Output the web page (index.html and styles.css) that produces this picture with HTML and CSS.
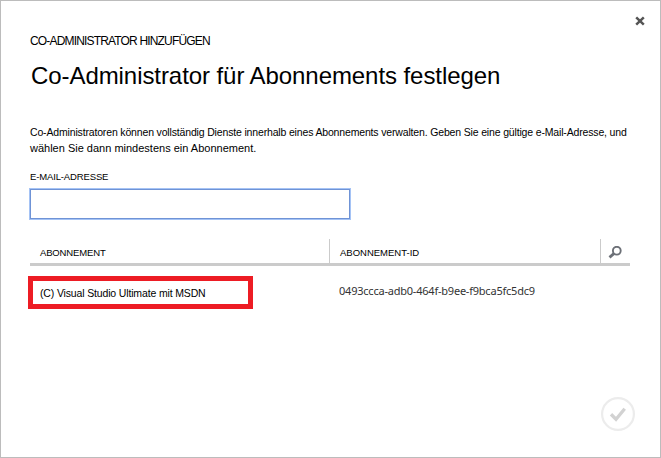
FILE: index.html
```html
<!DOCTYPE html>
<html lang="de">
<head>
<meta charset="utf-8">
<title>Co-Administrator hinzufügen</title>
<link rel="stylesheet" href="styles.css">
</head>
<body>
<main class="dialog">
  <button class="close" aria-label="Schließen"><svg width="10" height="10" viewBox="0 0 10 10"><path d="M1.2 1.4 8.8 8.6M8.8 1.4 1.2 8.6" stroke="#555" stroke-width="2.5"/></svg></button>
  <div class="eyebrow"><span>CO-ADMINISTRATOR HINZUFÜGEN</span></div>
  <h1 class="title"><span>Co-Administrator für Abonnements festlegen</span></h1>
  <p class="intro"><span class="line-one">Co-Administratoren können vollständig Dienste innerhalb eines Abonnements verwalten. Geben Sie eine gültige e-Mail-Adresse, und</span><br><span class="line-two">wählen Sie dann mindestens ein Abonnement.</span></p>
  <label class="label" for="email"><span>E-MAIL-ADRESSE</span></label>
  <input class="email" id="email" type="text">
  <div class="head">
    <div class="cell name"><span>ABONNEMENT</span></div>
    <div class="cell id"><span>ABONNEMENT-ID</span></div>
    <div class="cell search"><svg width="14" height="14" viewBox="0 0 14 14"><circle cx="8.8" cy="4.7" r="3.9" fill="none" stroke="#6c7077" stroke-width="1.9"/><path d="M6.1 7.4 1.5 11.4" stroke="#6c7077" stroke-width="2.8"/></svg></div>
  </div>
  <div class="row">
    <div class="selected"><span>(C) Visual Studio Ultimate mit MSDN</span></div>
    <div class="guid"><span>0493ccca-adb0-464f-b9ee-f9bca5fc5dc9</span></div>
  </div>
  <button class="confirm" aria-label="Bestätigen"><svg width="34" height="34" viewBox="0 0 34 34"><circle cx="17" cy="17" r="15.9" fill="none" stroke="#ececec" stroke-width="2.2"/><path d="M10 17.3 15 22.2 23.7 11.8" fill="none" stroke="#d2d2d2" stroke-width="3.3"/></svg></button>
</main>
</body>
</html>
```
FILE: styles.css
```css
* { box-sizing: border-box; }
body { margin: 0; background: #fff; color: #000; font-family: "Liberation Sans", Arial, sans-serif; }
button { padding: 0; border: 0; background: none; }
svg { display: block; }
span { white-space: nowrap; }
.dialog { display: flex; flex-direction: column; width: 661px; height: 458px; padding: 15px 29px 0 29px; border: 1px solid #bcbcbc; }
.close { align-self: flex-end; width: 10px; height: 10px; margin-right: -14px; }
.eyebrow { height: 16px; margin-top: 7px; font-size: 12px; line-height: 16px; letter-spacing: -0.83px; }
.title { height: 30px; margin: 12px 0 0 1px; font-size: 24px; font-weight: 400; line-height: 30px; letter-spacing: -0.07px; }
.intro { height: 32px; margin: 33px 0 0; font-size: 11px; line-height: 16px; }
.line-one { font-size: 10.5px; letter-spacing: -0.16px; }
.label { height: 14px; margin-top: 14px; font-size: 9.5px; line-height: 14px; letter-spacing: -0.14px; }
.email { width: 320px; height: 30px; margin: 5px 0 1px; border: 1px solid #6f93d6; outline: none; box-shadow: 0 0 0 1px #a5c3f5; background: #fff; }
.head { display: flex; width: 600px; height: 27px; margin-top: 19px; border-bottom: 3px solid #cbcbcb; font-size: 9.5px; line-height: 14px; }
.cell { padding: 7px 0 0 10px; }
.name { width: 299px; letter-spacing: -0.15px; }
.id { width: 271px; border-left: 1px solid #cbcbcb; }
.search { width: 30px; padding: 7px 0 0 7px; border-left: 1px solid #cbcbcb; }
.row { display: flex; margin-top: 10px; }
.selected { width: 225px; height: 33px; margin-left: -2px; padding: 5px 0 0 7px; border: 5px solid #ed1c24; font-size: 10.5px; line-height: 14px; letter-spacing: -0.15px; }
.guid { margin: 7px 0 0 86px; font: 11px/16px "Noto Sans", sans-serif; letter-spacing: -0.22px; color: #333; }
.confirm { align-self: flex-end; width: 34px; height: 34px; margin: 88px -4px 0 0; }
```
